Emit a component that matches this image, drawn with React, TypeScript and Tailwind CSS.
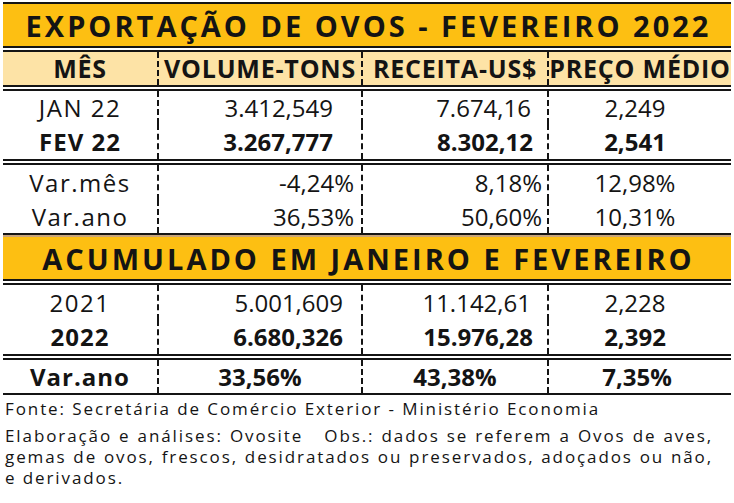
const cols = 'grid grid-cols-[154px_204px_186px_184px]'
const rule = 'h-[6px] border-y-2 border-[#141414]'
const dash = 'border-l-2 border-dashed border-[#141414]'

type Cell = { text: string; align: 'center' | 'right'; pr?: string }

function Row({ cells, bold, h }: { cells: Cell[]; bold?: boolean; h: string }) {
  return (
    <div className={`${cols} ${h} text-[24px] leading-none text-[#141414] ${bold ? 'font-bold' : ''}`}>
      {cells.map((c, i) => (
        <div
          key={i}
          className={`flex items-center ${i > 0 ? dash : bold ? 'tracking-[1px]' : 'tracking-[1.5px]'} ${
            c.align === 'center' ? 'justify-center' : 'justify-end'
          } ${c.pr ?? ''}`}
        >
          {c.text}
        </div>
      ))}
    </div>
  )
}

function Band({ text }: { text: string }) {
  return (
    <div className="flex h-[42px] items-center justify-center bg-[#fdbf12] pl-[3px] text-[29px] font-bold leading-none tracking-[3px] text-[#141414]">
      {text}
    </div>
  )
}

export default function App() {
  return (
    <div className="h-[503px] w-[734px] bg-white pt-[2px] font-['Open_Sans',sans-serif]">
      <div className="ml-[3px] w-[728px]">
        <div className="h-[2px] bg-[#141414]" />
        <Band text="EXPORTAÇÃO DE OVOS - FEVEREIRO 2022" />
        <div className={rule} />
        <div className={`${cols} h-[33px] bg-[#fde3a6] text-[25px] font-bold leading-none tracking-[0.8px] text-[#141414]`}>
          <div className="flex items-center justify-center">MÊS</div>
          <div className={`flex items-center justify-center ${dash}`}>VOLUME-TONS</div>
          <div className={`flex items-center justify-center ${dash}`}>RECEITA-US$</div>
          <div className={`flex items-center justify-center ${dash}`}>PREÇO MÉDIO</div>
        </div>
        <div className={rule} />
        <Row
          h="h-[33px]"
          cells={[
            { text: 'JAN 22', align: 'center' },
            { text: '3.412,549', align: 'right', pr: 'pr-[28px]' },
            { text: '7.674,16', align: 'right', pr: 'pr-[16px]' },
            { text: '2,249', align: 'center', pr: 'pr-[10px]' },
          ]}
        />
        <Row
          bold
          h="h-[35px]"
          cells={[
            { text: 'FEV 22', align: 'center' },
            { text: '3.267,777', align: 'right', pr: 'pr-[28px]' },
            { text: '8.302,12', align: 'right', pr: 'pr-[14px]' },
            { text: '2,541', align: 'center', pr: 'pr-[10px]' },
          ]}
        />
        <div className={rule} />
        <Row
          h="h-[35px]"
          cells={[
            { text: 'Var.mês', align: 'center' },
            { text: '-4,24%', align: 'right', pr: 'pr-[7px]' },
            { text: '8,18%', align: 'right', pr: 'pr-[5px]' },
            { text: '12,98%', align: 'center', pr: 'pr-[10px]' },
          ]}
        />
        <Row
          h="h-[33px]"
          cells={[
            { text: 'Var.ano', align: 'center' },
            { text: '36,53%', align: 'right', pr: 'pr-[7px]' },
            { text: '50,60%', align: 'right', pr: 'pr-[5px]' },
            { text: '10,31%', align: 'center', pr: 'pr-[10px]' },
          ]}
        />
        <div className="h-[2px] bg-[#141414]" />
        <div className="h-[2px] bg-[#c9a57a]" />
        <Band text="ACUMULADO EM JANEIRO E FEVEREIRO" />
        <div className={rule} />
        <Row
          h="h-[35px]"
          cells={[
            { text: '2021', align: 'center' },
            { text: '5.001,609', align: 'right', pr: 'pr-[18px]' },
            { text: '11.142,61', align: 'right', pr: 'pr-[16px]' },
            { text: '2,228', align: 'center', pr: 'pr-[10px]' },
          ]}
        />
        <Row
          bold
          h="h-[34px]"
          cells={[
            { text: '2022', align: 'center' },
            { text: '6.680,326', align: 'right', pr: 'pr-[18px]' },
            { text: '15.976,28', align: 'right', pr: 'pr-[14px]' },
            { text: '2,392', align: 'center', pr: 'pr-[10px]' },
          ]}
        />
        <div className={rule} />
        <Row
          bold
          h="h-[33px]"
          cells={[
            { text: 'Var.ano', align: 'center' },
            { text: '33,56%', align: 'center' },
            { text: '43,38%', align: 'center' },
            { text: '7,35%', align: 'center', pr: 'pr-[6px]' },
          ]}
        />
        <div className="h-[2px] bg-[#141414]" />
      </div>
      <div className="w-[713px] pl-[5px] pt-[3px] text-[17px] leading-[21px] tracking-[1.9px] text-[#141414]">
        <p className="mb-[6px]">Fonte: Secretária de Comércio Exterior - Ministério Economia</p>
        <p className="text-justify [text-align-last:justify]">
          Elaboração e análises: Ovosite&nbsp;&nbsp; Obs.: dados se referem a Ovos de aves,
        </p>
        <p className="text-justify [text-align-last:justify]">
          gemas de ovos, frescos, desidratados ou preservados, adoçados ou não,
        </p>
        <p>e derivados.</p>
      </div>
    </div>
  )
}
